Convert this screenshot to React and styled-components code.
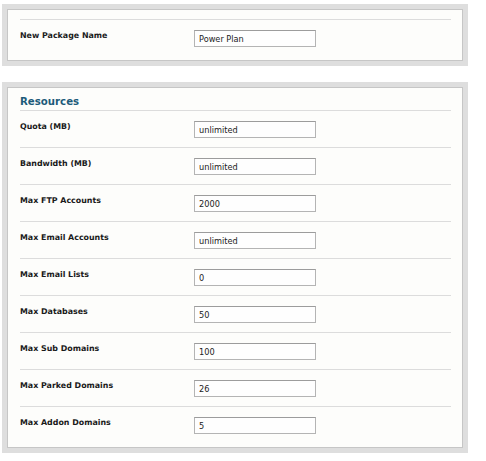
import React from 'react';
import styled, { createGlobalStyle } from 'styled-components';

const GlobalStyle = createGlobalStyle`
  body {
    margin: 0;
    background: #ffffff;
    font-family: "DejaVu Sans", Verdana, sans-serif;
  }
`;

const resources = [
  ['Quota (MB)', 'unlimited'],
  ['Bandwidth (MB)', 'unlimited'],
  ['Max FTP Accounts', '2000'],
  ['Max Email Accounts', 'unlimited'],
  ['Max Email Lists', '0'],
  ['Max Databases', '50'],
  ['Max Sub Domains', '100'],
  ['Max Parked Domains', '26'],
  ['Max Addon Domains', '5'],
];

function Field({ label, value }) {
  return (
    <Row>
      <Label>{label}</Label>
      <TextInput defaultValue={value} />
    </Row>
  );
}

export default function App() {
  return (
    <Page>
      <GlobalStyle />
      <Panel>
        <Inner>
          <Header $empty />
          <Field label="New Package Name" value="Power Plan" />
        </Inner>
      </Panel>
      <Panel>
        <Inner>
          <Header>Resources</Header>
          {resources.map(([label, value]) => (
            <Field key={label} label={label} value={value} />
          ))}
        </Inner>
      </Panel>
    </Page>
  );
}

const Page = styled.div`
  display: flex;
  flex-direction: column;
  gap: 16px;
  padding: 4px 0 0 2px;
  width: 466px;
`;

const Panel = styled.div`
  border: 5px solid #dedede;
  background: #dedede;
`;

const Inner = styled.div`
  border: 1px solid #c6c6c6;
  background: #fdfdfb;
  padding: 0 11px 4px 12px;
`;

const Header = styled.div`
  height: ${p => (p.$empty ? '9px' : '22px')};
  box-sizing: border-box;
  padding-top: 7px;
  line-height: 14px;
  font-size: 10.2px;
  font-weight: bold;
  color: #1d5b7a;
`;

const Row = styled.div`
  display: flex;
  align-items: flex-start;
  border-top: 1px solid #dcdcdc;
  padding: 10px 0 9px;
  height: 17px;
`;

const Label = styled.div`
  width: 174px;
  font-size: 7.9px;
  line-height: 12px;
  font-weight: bold;
  color: #1a1a1a;
`;

const TextInput = styled.input`
  box-sizing: border-box;
  width: 122px;
  height: 17px;
  margin: 0;
  padding: 0 4px;
  border: 1px solid #b4b4b4;
  border-top-color: #9c9c9c;
  background: #fefefe;
  font-family: "DejaVu Sans", Verdana, sans-serif;
  font-size: 8.2px;
  color: #222;
  outline: none;
`;
